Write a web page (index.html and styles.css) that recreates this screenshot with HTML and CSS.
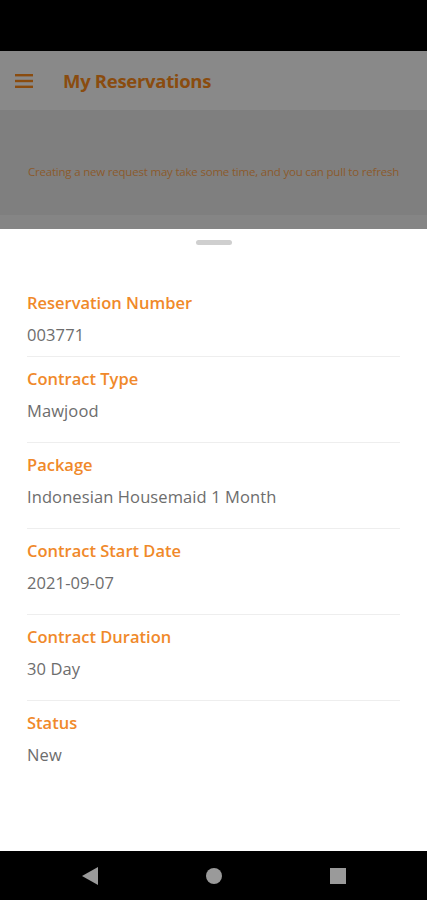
FILE: index.html
```html
<!DOCTYPE html>
<html lang="en">
<head>
    <meta charset="UTF-8">
    <meta name="viewport" content="width=device-width, initial-scale=1.0">
    <title>My Reservations</title>
    <link rel="stylesheet" href="styles.css">
</head>
<body>
    <div class="status-bar"></div>
    <div class="app-bar">
        <svg class="menu-icon" width="18" height="14" viewBox="0 0 18 14">
            <rect x="0" y="0" width="18" height="2.4" fill="#8a4c0f"/>
            <rect x="0" y="5.8" width="18" height="2.4" fill="#8a4c0f"/>
            <rect x="0" y="11.6" width="18" height="2.4" fill="#8a4c0f"/>
        </svg>
        <h1 class="title">My Reservations</h1>
    </div>
    <div class="notice">
        <p>Creating a new request may take some time, and you can pull to refresh</p>
    </div>
    <div class="band"></div>

    <div class="sheet">
        <div class="handle"></div>
        <div class="details">
            <div class="row first">
                <div class="label">Reservation Number</div>
                <div class="value">003771</div>
            </div>
            <div class="row">
                <div class="label">Contract Type</div>
                <div class="value">Mawjood</div>
            </div>
            <div class="row">
                <div class="label">Package</div>
                <div class="value">Indonesian Housemaid 1 Month</div>
            </div>
            <div class="row">
                <div class="label">Contract Start Date</div>
                <div class="value">2021-09-07</div>
            </div>
            <div class="row">
                <div class="label">Contract Duration</div>
                <div class="value">30 Day</div>
            </div>
            <div class="row last">
                <div class="label">Status</div>
                <div class="value">New</div>
            </div>
        </div>
    </div>

    <div class="nav-bar">
        <svg width="18" height="20" viewBox="0 0 18 20"><polygon points="17,1 17,19 1,10" fill="#9a9a9a"/></svg>
        <svg width="18" height="20" viewBox="0 0 18 20"><circle cx="9" cy="10" r="8" fill="#9a9a9a"/></svg>
        <svg width="18" height="20" viewBox="0 0 18 20"><rect x="1" y="2" width="16" height="16" fill="#9a9a9a"/></svg>
    </div>
</body>
</html>
```

FILE: styles.css
```css
body {
    font-family: "Open Sans", Arial, sans-serif;
    margin: 0;
    padding: 0;
    width: 427px;
    height: 900px;
    display: flex;
    flex-direction: column;
    background-color: #fff;
}
.status-bar {
    height: 51px;
    background-color: #000;
}
.app-bar {
    height: 59px;
    background-color: #898989;
    display: flex;
    align-items: center;
    padding-left: 15px;
}
.menu-icon {
    margin-right: 30px;
}
.title {
    margin: 0;
    font-size: 18.5px;
    font-weight: 700;
    color: #8a4c0f;
    letter-spacing: -0.3px;
}
.notice {
    height: 105px;
    background-color: #7f7f7f;
    display: flex;
    align-items: center;
    justify-content: center;
}
.notice p {
    margin: 18px 0 0;
    font-size: 11.5px;
    color: #8b5a2c;
    letter-spacing: -0.2px;
}
.band {
    height: 14px;
    background-color: #858585;
}
.sheet {
    flex: 1;
    background-color: #fff;
    padding-top: 11px;
}
.handle {
    width: 36px;
    height: 5px;
    border-radius: 3px;
    background-color: #cfcfcf;
    margin: 0 auto;
}
.details {
    padding: 47px 27px 0;
}
.row {
    border-bottom: 1px solid #eeeeee;
    padding: 11px 0 20px;
}
.row.first {
    padding-top: 0;
    padding-bottom: 10px;
}
.row.last {
    border-bottom: none;
}
.label {
    font-size: 16.5px;
    font-weight: 600;
    color: #f0892a;
    line-height: 22px;
}
.value {
    font-size: 16.5px;
    color: #6d6d6d;
    line-height: 22px;
    margin-top: 10px;
    letter-spacing: 0.1px;
}
.nav-bar {
    height: 49px;
    background-color: #000;
    display: flex;
    align-items: center;
    justify-content: center;
    gap: 106px;
}
```
